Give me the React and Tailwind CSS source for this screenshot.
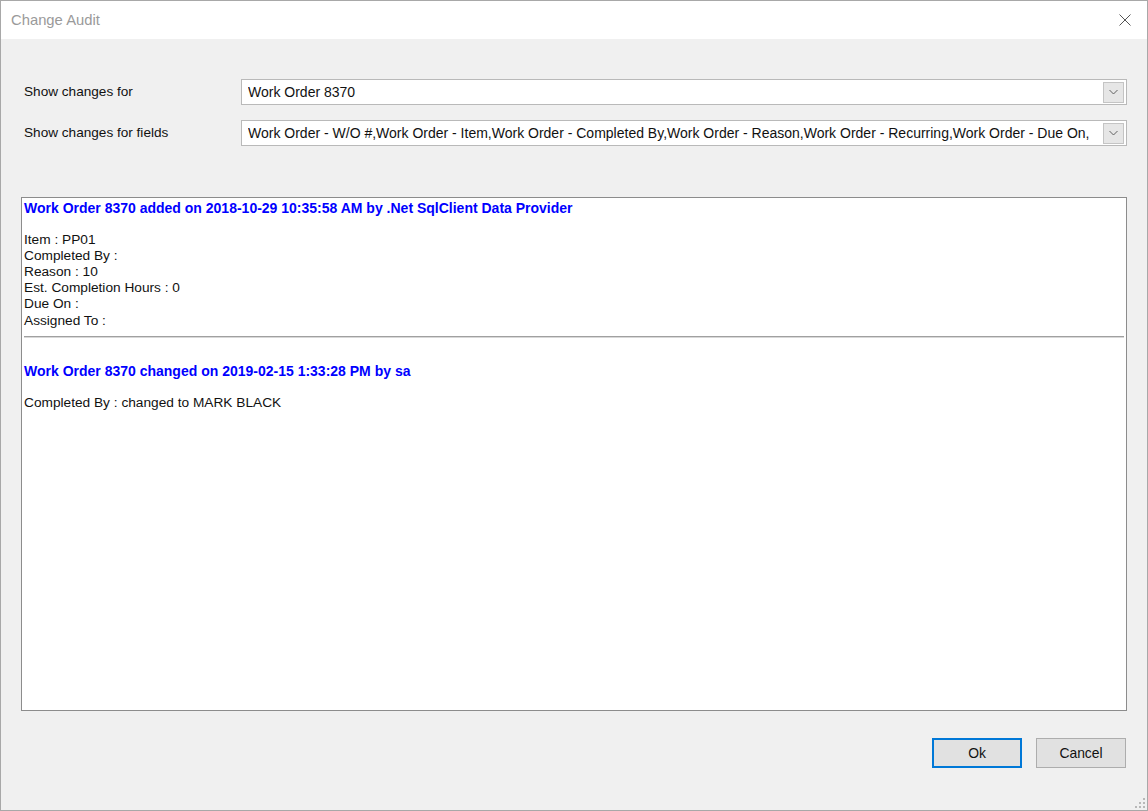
import React from "react";

const font = { fontFamily: '"Liberation Sans", Arial, sans-serif' };

function Combo({ text }) {
  return (
    <div className="flex h-[26px] flex-1 items-center border border-[#b9b9b9] bg-white pl-[6px] pr-[2px]">
      <div className="flex-1 overflow-hidden whitespace-nowrap text-[14px] text-[#111]">{text}</div>
      <div className="ml-1 flex h-[21px] w-[21px] items-center justify-center border border-[#c4c4c4] bg-[#e6e6e6]">
        <svg width="9" height="6" viewBox="0 0 9 6">
          <path d="M0.5 1 L4.5 5 L8.5 1" fill="none" stroke="#606060" strokeWidth="1" />
        </svg>
      </div>
    </div>
  );
}

export default function App() {
  const lines = ["Item : PP01", "Completed By :", "Reason : 10", "Est. Completion Hours : 0", "Due On :", "Assigned To :"];
  return (
    <div style={font} className="flex h-[811px] w-[1148px] flex-col border border-[#a8a8a8] bg-[#f0f0f0]">
      <div className="flex h-[38px] items-center justify-between bg-white pl-[10px] pr-[16px]">
        <span className="text-[14.8px] text-[#9a9a9a]">Change Audit</span>
        <svg width="12" height="12" viewBox="0 0 12 12">
          <path d="M0.5 0.5 L11.5 11.5 M11.5 0.5 L0.5 11.5" stroke="#555" strokeWidth="1" />
        </svg>
      </div>
      <div className="relative flex flex-1 flex-col pl-[20px] pr-[20px] pt-[40px]">
        <div className="flex items-center">
          <div className="w-[220px] pl-[3px] text-[13.6px] text-[#111]">Show changes for</div>
          <Combo text="Work Order 8370" />
        </div>
        <div className="mt-[15px] flex items-center">
          <div className="w-[220px] pl-[3px] text-[13.6px] text-[#111]">Show changes for fields</div>
          <Combo text="Work Order - W/O #,Work Order - Item,Work Order - Completed By,Work Order - Reason,Work Order - Recurring,Work Order - Due On," />
        </div>
        <div className="mt-[51px] h-[514px] border border-[#8c8c8c] bg-white pt-[2px] text-[13.7px] leading-[16.1px] text-[#111]">
          <div className="pl-[2px] text-[14px] font-bold text-[#0000ff]">
            Work Order 8370 added on 2018-10-29 10:35:58 AM by .Net SqlClient Data Provider
          </div>
          <div className="h-[16px]" />
          {lines.map((l) => (
            <div key={l} className="pl-[2px]">{l}</div>
          ))}
          <div className="mx-[2px] mt-[7px] h-[2px] border-t border-[#a0a0a0] bg-[#d8d8d8]" />
          <div className="mt-[25px] pl-[2px] text-[14px] font-bold text-[#0000ff]">
            Work Order 8370 changed on 2019-02-15 1:33:28 PM by sa
          </div>
          <div className="h-[16px]" />
          <div className="pl-[2px]">Completed By : changed to MARK BLACK</div>
        </div>
        <div className="mt-[27px] flex justify-end gap-[14px] pr-[1px]">
          <button className="flex h-[30px] w-[90px] items-center justify-center border-2 border-[#0078d7] bg-[#e1e1e1] text-[13.9px] text-[#111]">
            Ok
          </button>
          <button className="flex h-[30px] w-[90px] items-center justify-center border border-[#adadad] bg-[#e1e1e1] text-[13.9px] text-[#111]">
            Cancel
          </button>
        </div>
        <svg className="absolute bottom-[2px] right-[2px]" width="10" height="10" viewBox="0 0 10 10">
          {[[8, 0], [8, 4], [4, 4], [8, 8], [4, 8], [0, 8]].map(([x, y], i) => (
            <rect key={i} x={x} y={y} width="2" height="2" fill="#b8b8b8" />
          ))}
        </svg>
      </div>
    </div>
  );
}
